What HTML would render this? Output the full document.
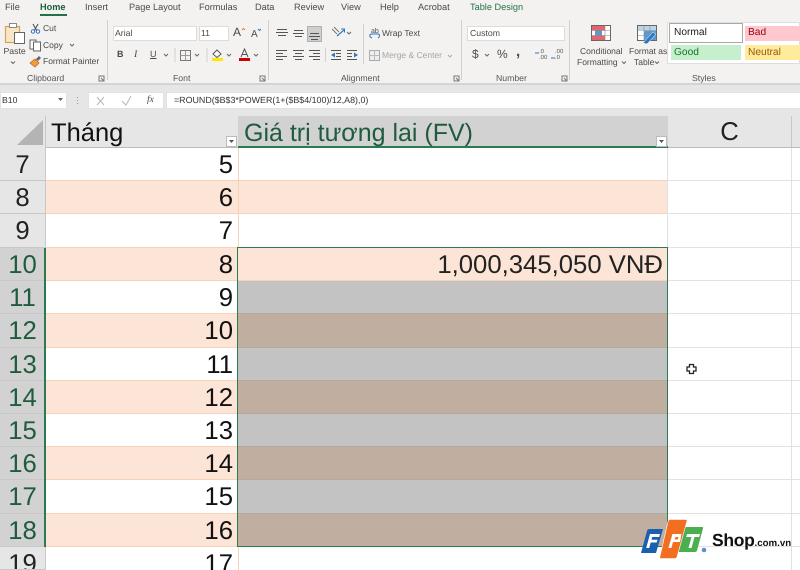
<!DOCTYPE html>
<html><head><meta charset="utf-8">
<style>
html,body{margin:0;padding:0}
body{width:800px;height:570px;overflow:hidden;position:relative;background:#fff;font-family:"Liberation Sans",sans-serif;text-rendering:geometricPrecision}
.a{position:absolute}
.t{position:absolute;white-space:nowrap;color:#4a4a4a;font-size:8.5px;line-height:11px}
.tab{position:absolute;top:2px;white-space:nowrap;color:#4a4a4a;font-size:9.2px;line-height:11px}
.r{position:absolute;left:0;width:45px;background:#e6e6e6;border-bottom:1px solid #c8c8c8;box-sizing:border-box;font-size:25.7px;text-align:center;color:#222;overflow:hidden}
.r.s{background:#d2d2d2;color:#1f5c3e}
.c{position:absolute;left:46px;width:192px;box-sizing:border-box;font-size:25.7px;text-align:right;padding-right:5px;color:#111;overflow:hidden;border-bottom:1px solid #f6d3b8}
.v{position:absolute;left:238px;width:430px;box-sizing:border-box;overflow:hidden;font-size:25.7px;text-align:right;padding-right:5px;color:#222}
.z{position:absolute;left:668px;width:132px;border-bottom:1px solid #e2e2e2;box-sizing:border-box}
.sep{position:absolute;top:20px;width:1px;height:60px;background:#d2d0ce}
.grp{position:absolute;top:73px;font-size:8.7px;color:#555;line-height:11px;white-space:nowrap}
svg{position:absolute;overflow:visible}
</style></head><body>

<div class="a" style="left:0;top:0;width:800px;height:83px;background:#f3f2f1"></div>
<div class="a" style="left:0;top:83px;width:800px;height:33px;background:#e6e6e6"></div>
<div class="a" style="left:0;top:83px;width:800px;height:2px;background:#d4d4d4"></div>

<div class="tab" style="left:5px">File</div>
<div class="tab" style="left:40px;color:#1f5c3e;font-weight:bold">Home</div>
<div class="a" style="left:40px;top:14px;width:27px;height:2px;background:#217346"></div>
<div class="tab" style="left:85px">Insert</div>
<div class="tab" style="left:129px">Page Layout</div>
<div class="tab" style="left:199px">Formulas</div>
<div class="tab" style="left:255px">Data</div>
<div class="tab" style="left:294px">Review</div>
<div class="tab" style="left:341px">View</div>
<div class="tab" style="left:380px">Help</div>
<div class="tab" style="left:418px">Acrobat</div>
<div class="tab" style="left:470px;color:#217346">Table Design</div>

<svg style="left:0;top:0" width="800" height="84">
<!-- clipboard -->
<rect x="5.500" y="26.500" width="14" height="16" fill="#f8e6c6" stroke="#d9a257" stroke-width="1.200"/>
<rect x="9.500" y="23.500" width="7" height="4" fill="#fff" stroke="#888"/>
<rect x="14.500" y="32.500" width="10" height="11" fill="#fff" stroke="#666"/>
<path d="M33 24l5 9M38 24l-5 9" stroke="#555" stroke-width="1.100" fill="none"/>
<circle cx="33" cy="31.500" r="1.700" fill="#fff" stroke="#2b79c2"/><circle cx="38" cy="31.500" r="1.700" fill="#fff" stroke="#2b79c2"/>
<rect x="30" y="40" width="6" height="9" fill="#fff" stroke="#666"/>
<rect x="33.500" y="42" width="7" height="9" fill="#fff" stroke="#666"/>
<path d="M30 63l5-4 4 4-4 4z" fill="#e8a33d" stroke="#c55a11" stroke-width=".7"/>
<path d="M36 59l3-3 2 2-3 3z" fill="#666"/>
<!-- chevrons -->
<path d="M11 61.500l2 2 2-2M70 44l2 2 2-2M192 33l2 2 2-2M223 33l2 2 2-2M164 54l2 2 2-2M195 54l2 2 2-2M227 54l2 2 2-2M254 54l2 2 2-2M347 32l2 2 2-2M485 54l2 2 2-2M557 33l2 2 2-2M622 61.500l2 2 2-2M655 61.500l2 2 2-2" stroke="#666" fill="none"/>
<path d="M448 55l2 2 2-2" stroke="#aaa" fill="none"/>
<!-- font grow/shrink -->
<path d="M242 30l1.500-1.500 1.500 1.500" stroke="#d9862b" fill="none"/>
<path d="M258 29l1.500 1.500 1.500-1.500" stroke="#2b79c2" fill="none"/>
<!-- font row -->
<rect x="180.500" y="50.500" width="10" height="10" fill="none" stroke="#777"/><path d="M185.500 50.500v10M180.500 55.500h10" stroke="#999"/>
<path d="M213 54l4-4 4 4-4 3.500z" fill="#fff" stroke="#555"/><rect x="212" y="58" width="11" height="3" fill="#ffe900"/>
<path d="M241 57l3.500-8 3.500 8M242 54.500h5" fill="none" stroke="#555"/><rect x="239" y="58" width="11" height="3" fill="#d00000"/>
<path d="M175 48v14M207 48v14" stroke="#d2d0ce"/>
<!-- launchers -->
<g fill="none" stroke="#777"><path d="M99 76h5v5h-5zM101 78l3 3"/><path d="M260 76h5v5h-5zM262 78l3 3"/><path d="M454 76h5v5h-5zM456 78l3 3"/><path d="M562 76h5v5h-5zM564 78l3 3"/></g>
</svg>
<div class="t" style="left:3.500px;top:46px;font-size:8.700px">Paste</div>
<div class="t" style="left:43px;top:23px">Cut</div>
<div class="t" style="left:43px;top:40px">Copy</div>
<div class="t" style="left:43px;top:56px">Format Painter</div>
<div class="grp" style="left:27px">Clipboard</div>
<div class="sep" style="left:107px"></div>

<div class="a" style="left:113px;top:26px;width:84px;height:15px;background:#fff;border:1px solid #dedcda;box-sizing:border-box"></div>
<div class="t" style="left:115px;top:28px;font-size:8.700px">Arial</div>
<div class="a" style="left:199px;top:26px;width:30px;height:15px;background:#fff;border:1px solid #dedcda;box-sizing:border-box"></div>
<div class="t" style="left:201px;top:28px;font-size:8.700px">11</div>
<div class="t" style="left:233px;top:27px;font-size:12px">A</div>
<div class="t" style="left:251px;top:29px;font-size:10px">A</div>
<div class="t" style="left:117px;top:49px;font-weight:bold;font-size:9px">B</div>
<div class="t" style="left:134px;top:49px;font-style:italic;font-family:'Liberation Serif',serif;font-size:10px">I</div>
<div class="t" style="left:150px;top:49px;text-decoration:underline;font-size:9px">U</div>
<div class="grp" style="left:173px">Font</div>
<div class="sep" style="left:268px"></div>

<div class="a" style="left:307px;top:26px;width:15px;height:16px;background:#cfcfcf;border:1px solid #b0b0b0;box-sizing:border-box"></div>
<svg style="left:0;top:0" width="460" height="84">
<g stroke="#555" fill="none">
<path d="M277 29.500h10M276 32.500h12M278 35.500h8"/>
<path d="M294 30.500h9M293 33.500h11M295 36.500h7"/>
<path d="M310 33.500h9M309 36.500h11M311 39.500h7"/>
<path d="M276 50.500h11M276 53.500h7M276 56.500h11M276 59.500h7"/>
<path d="M293 50.500h11M295 53.500h7M293 56.500h11M295 59.500h7"/>
<path d="M309 50.500h11M313 53.500h7M309 56.500h11M313 59.500h7"/>
<path d="M331 50.500h10M336 53.500h5M336 56.500h5M331 59.500h10"/>
<path d="M347 50.500h10M347 53.500h5M347 56.500h5M347 59.500h10"/>
</g>
<path d="M331 55l4-2.500v5zM358 55l-4-2.500v5z" fill="#2b79c2"/>
<path d="M337 36l7-6" stroke="#2b79c2" stroke-width="1.200"/><path d="M341 29h3.500v3.500" stroke="#2b79c2" fill="none"/><path d="M332 29l5 5M334 27l5 5" stroke="#777"/>
<path d="M325.500 48v14M363.500 24v40" stroke="#d2d0ce"/>
<path d="M372 38c-3-1-3-4 0-4h6c2 0 2 3 0 4" stroke="#2b79c2" fill="none"/>
<rect x="369.500" y="50.500" width="10" height="10" fill="#ededed" stroke="#aaa"/><path d="M369.500 55.500h10M374.500 50.500v10" stroke="#bbb"/>
</svg>
<div class="t" style="left:371px;top:26px;font-size:7px">ab</div>
<div class="t" style="left:382px;top:28px">Wrap Text</div>
<div class="t" style="left:382px;top:50px;color:#a5a5a5">Merge &amp; Center</div>
<div class="grp" style="left:341px">Alignment</div>
<div class="sep" style="left:461px"></div>

<div class="a" style="left:467px;top:26px;width:98px;height:15px;background:#fff;border:1px solid #dedcda;box-sizing:border-box"></div>
<div class="t" style="left:470px;top:28px;font-size:8.700px">Custom</div>
<div class="t" style="left:472px;top:49px;font-size:12px">$</div>
<div class="t" style="left:497px;top:49px;font-size:12px">%</div>
<div class="t" style="left:516px;top:46px;font-size:15px;font-weight:bold">,</div>
<div class="t" style="left:539px;top:50px;font-size:6px;line-height:5.500px;color:#555">.0<br>.00</div>
<div class="t" style="left:555px;top:50px;font-size:6px;line-height:5.500px;color:#555">.00<br>.0</div>
<svg style="left:0;top:0" width="570" height="84"><path d="M535 53h4M551 58h4" stroke="#2b79c2"/></svg>
<div class="grp" style="left:496px">Number</div>
<div class="sep" style="left:569px"></div>

<svg style="left:0;top:0" width="800" height="84">
<rect x="591.500" y="25.500" width="19" height="15" fill="#fff" stroke="#666"/>
<rect x="592" y="26" width="13" height="4.500" fill="#e8636b"/><rect x="592" y="35.500" width="13" height="4.500" fill="#e8636b"/><rect x="595" y="30.500" width="7" height="5" fill="#5b9bd5"/>
<path d="M591.500 30.500h19M591.500 35.500h19M598 25.500v15M605 25.500v15" stroke="#8a8a8a" stroke-width=".6"/>
<rect x="637.500" y="25.500" width="19" height="15" fill="#fff" stroke="#666"/>
<rect x="638" y="26" width="18" height="4" fill="#bcd3e8"/><rect x="644" y="30.500" width="12" height="9.500" fill="#5b9bd5"/>
<path d="M637.500 30.500h19M637.500 35.500h19M644 25.500v15M650 25.500v15" stroke="#8a8a8a" stroke-width=".6"/>
<path d="M643 43l10-11 3 2-9 10z" fill="#2b79c2" stroke="#fff" stroke-width=".5"/>
</svg>
<div class="t" style="left:580px;top:46px">Conditional</div>
<div class="t" style="left:577px;top:57px">Formatting</div>
<div class="t" style="left:629px;top:46px">Format as</div>
<div class="t" style="left:634px;top:57px">Table</div>

<div class="a" style="left:667px;top:22px;width:133px;height:42px;background:#fff;border:1px solid #e0dedc;box-sizing:border-box"></div>
<div class="a" style="left:669px;top:23px;width:74px;height:20px;background:#fff;border:1.500px solid #a8a8a8;box-sizing:border-box"></div>
<div class="t" style="left:674px;top:27px;font-size:10.200px;color:#222">Normal</div>
<div class="a" style="left:745px;top:26px;width:55px;height:15px;background:#ffc7ce"></div>
<div class="t" style="left:748px;top:27px;font-size:10.200px;color:#9c0006">Bad</div>
<div class="a" style="left:671px;top:45px;width:70px;height:15px;background:#c6efce"></div>
<div class="t" style="left:674px;top:47px;font-size:10.200px;color:#16702a">Good</div>
<div class="a" style="left:745px;top:45px;width:55px;height:15px;background:#ffeb9c"></div>
<div class="t" style="left:748px;top:47px;font-size:10.200px;color:#9c5700">Neutral</div>
<div class="grp" style="left:692px">Styles</div>

<div class="a" style="left:0;top:92px;width:67px;height:17px;background:#fff;border:1px solid #e2e2e2;box-sizing:border-box"></div>
<div class="t" style="left:2px;top:95px;color:#333;font-size:8.700px">B10</div>
<div class="a" style="left:88px;top:92px;width:76px;height:17px;background:#fff;border:1px solid #e2e2e2;box-sizing:border-box"></div>
<svg style="left:0;top:0" width="170" height="116"><path d="M58 98l2.500 3 2.500-3z" fill="#666"/>
<path d="M77.500 97v1M77.500 100v1M77.500 103v1" stroke="#999"/>
<path d="M97 97l7 8M104 97l-7 8M122 101l4 4 5-9" stroke="#b8b8b8" fill="none"/></svg>
<div class="t" style="left:147px;top:95px;font-family:'Liberation Serif',serif;font-style:italic;color:#444;font-size:9.500px">fx</div>
<div class="a" style="left:166px;top:92px;width:634px;height:17px;background:#fff;border:1px solid #e2e2e2;border-right:0;box-sizing:border-box"></div>
<div class="t" style="left:174px;top:95px;color:#333;font-size:8.900px">=ROUND($B$3*POWER(1+($B$4/100)/12,A8),0)</div>

<div class="a" style="left:0;top:116px;width:800px;height:32px;background:#e6e6e6"></div>
<svg style="left:0;top:0" width="50" height="148"><path d="M17 145L43 120v25z" fill="#b4b4b4"/></svg>
<div class="a" style="left:45px;top:116px;width:1px;height:454px;background:#c8c8c8"></div>
<div class="a" style="left:46px;top:116px;width:192px;height:32px;background:#e6e6e6;border-bottom:1px solid #bbb;box-sizing:border-box"></div>
<div class="a" style="left:51px;top:117px;font-size:25.500px;line-height:32px;color:#111">Tháng</div>
<div class="a" style="left:238px;top:116px;width:430px;height:32px;background:#d2d2d2;border-bottom:2px solid #2b7a52;box-sizing:border-box"></div>
<div class="a" style="left:244px;top:117px;font-size:25px;line-height:32px;color:#1f5c3e;white-space:nowrap">Giá trị tương lai (FV)</div>
<div class="a" style="left:668px;top:116px;width:123px;height:32px;box-sizing:border-box;border-bottom:1px solid #bbb;text-align:center;font-size:25.700px;line-height:33px;color:#222">C</div>
<div class="a" style="left:791px;top:116px;width:9px;height:32px;box-sizing:border-box;border-left:1px solid #c8c8c8;border-bottom:1px solid #bbb"></div>
<div class="a" style="left:226px;top:136px;width:11px;height:11px;background:#fff;border:1px solid #bbb;box-sizing:border-box"></div>
<div class="a" style="left:656px;top:136px;width:11px;height:11px;background:#fff;border:1px solid #bbb;box-sizing:border-box"></div>
<svg style="left:0;top:0" width="670" height="148"><path d="M229 140h5l-2.500 3zM659 140h5l-2.500 3z" fill="#555"/></svg>

<!-- rows -->
<div class="r" style="top:148px;height:33px;line-height:35px">7</div>
<div class="r" style="top:181px;height:33px;line-height:35px">8</div>
<div class="r" style="top:214px;height:34px;line-height:35px">9</div>
<div class="r s" style="top:248px;height:33px;line-height:35px">10</div>
<div class="r s" style="top:281px;height:33px;line-height:35px">11</div>
<div class="r s" style="top:314px;height:34px;line-height:35px">12</div>
<div class="r s" style="top:348px;height:33px;line-height:35px">13</div>
<div class="r s" style="top:381px;height:33px;line-height:35px">14</div>
<div class="r s" style="top:414px;height:33px;line-height:35px">15</div>
<div class="r s" style="top:447px;height:33px;line-height:35px">16</div>
<div class="r s" style="top:480px;height:34px;line-height:35px">17</div>
<div class="r s" style="top:514px;height:33px;line-height:35px">18</div>
<div class="r" style="top:547px;height:23px;line-height:35px">19</div>

<div class="c" style="top:148px;height:33px;line-height:35px;background:#fff">5</div>
<div class="c" style="top:181px;height:33px;line-height:35px;background:#fce4d6">6</div>
<div class="c" style="top:214px;height:34px;line-height:35px;background:#fff">7</div>
<div class="c" style="top:248px;height:33px;line-height:35px;background:#fce4d6">8</div>
<div class="c" style="top:281px;height:33px;line-height:35px;background:#fff">9</div>
<div class="c" style="top:314px;height:34px;line-height:35px;background:#fce4d6">10</div>
<div class="c" style="top:348px;height:33px;line-height:35px;background:#fff">11</div>
<div class="c" style="top:381px;height:33px;line-height:35px;background:#fce4d6">12</div>
<div class="c" style="top:414px;height:33px;line-height:35px;background:#fff">13</div>
<div class="c" style="top:447px;height:33px;line-height:35px;background:#fce4d6">14</div>
<div class="c" style="top:480px;height:34px;line-height:35px;background:#fff">15</div>
<div class="c" style="top:514px;height:33px;line-height:35px;background:#fce4d6">16</div>
<div class="c" style="top:547px;height:23px;line-height:35px;background:#fff;border-bottom:0">17</div>

<div class="v" style="top:148px;height:33px;background:#fff;border-bottom:1px solid #f6d3b8"></div>
<div class="v" style="top:181px;height:33px;background:#fce4d6;border-bottom:1px solid #f6d3b8"></div>
<div class="v" style="top:214px;height:34px;background:#fff;border-bottom:1px solid #f6d3b8"></div>
<div class="v" style="top:248px;height:33px;line-height:35px;background:#fce4d6;border-bottom:1px solid #f6d3b8">1,000,345,050 VNĐ</div>
<div class="v" style="top:281px;height:33px;background:#c3c3c3;border-bottom:1px solid #b4a99f"></div>
<div class="v" style="top:314px;height:34px;background:#c0afa1;border-bottom:1px solid #b4a99f"></div>
<div class="v" style="top:348px;height:33px;background:#c3c3c3;border-bottom:1px solid #b4a99f"></div>
<div class="v" style="top:381px;height:33px;background:#c0afa1;border-bottom:1px solid #b4a99f"></div>
<div class="v" style="top:414px;height:33px;background:#c3c3c3;border-bottom:1px solid #b4a99f"></div>
<div class="v" style="top:447px;height:33px;background:#c0afa1;border-bottom:1px solid #b4a99f"></div>
<div class="v" style="top:480px;height:34px;background:#c3c3c3;border-bottom:1px solid #b4a99f"></div>
<div class="v" style="top:514px;height:33px;background:#c0afa1"></div>
<div class="a" style="left:238px;top:148px;width:1px;height:99px;background:#f6d3b8"></div>
<div class="a" style="left:238px;top:547px;width:1px;height:23px;background:#f6d3b8"></div>

<!-- column C gridlines -->
<div class="z" style="top:148px;height:33px"></div>
<div class="z" style="top:181px;height:33px"></div>
<div class="z" style="top:214px;height:34px"></div>
<div class="z" style="top:248px;height:33px"></div>
<div class="z" style="top:281px;height:33px"></div>
<div class="z" style="top:314px;height:34px"></div>
<div class="z" style="top:348px;height:33px"></div>
<div class="z" style="top:381px;height:33px"></div>
<div class="z" style="top:414px;height:33px"></div>
<div class="z" style="top:447px;height:33px"></div>
<div class="z" style="top:480px;height:34px"></div>
<div class="z" style="top:514px;height:33px"></div>
<div class="a" style="left:791px;top:148px;width:1px;height:422px;background:#e2e2e2"></div>

<!-- selection -->
<div class="a" style="left:44px;top:248px;width:2px;height:299px;background:#2b7a52"></div>
<div class="a" style="left:237px;top:247px;width:431px;height:300px;border:1px solid #2b7a52;box-sizing:border-box"></div>
<div class="a" style="left:667px;top:148px;width:1px;height:99px;background:#e0e0e0"></div>

<!-- cursor -->
<svg style="left:0;top:0" width="800" height="570"><path d="M689.500 364.500h4v2.500h2.500v4h-2.500v2.500h-4V371H687v-4h2.500z" fill="#fff" stroke="#222" stroke-width="1.300"/></svg>

<!-- FPT logo -->
<svg style="left:0;top:0" width="800" height="570">
<path d="M647 531q.5-2 2.500-2H663l-7 24h-15z" fill="#1b5fae"/>
<path d="M683 527h19q1.500 0 1 1.500l-6 22q-.5 1.500-2 1.500h-18z" fill="#4bae4f"/>
<path d="M668 521.500q.5-2 2.500-2H686q1.500 0 1 1.500l-10 36q-.5 1.500-2 1.500h-15.500z" fill="#f26f21" stroke="#fff" stroke-width=".6"/>
<path d="M650 534h10l-.8 3h-7l-.7 2.800h6l-.8 2.700h-6l-1.500 5.500h-3z" fill="#fff"/>
<path d="M672.500 534h9l-1.500 8h-7l-1.600 6h-3zM675.500 537l-.8 2.500h3.200l.5-2.500z" fill="#fff" fill-rule="evenodd"/>
<path d="M687 534h13l-.8 3h-4.700l-3 11h-3l3-11h-5.300z" fill="#fff"/>
<circle cx="704" cy="550" r="2.300" fill="#5a8fc9"/>
</svg>
<div class="a" style="left:712px;top:528px;font-size:17.500px;line-height:24px;font-weight:bold;color:#111;letter-spacing:-.3px;white-space:nowrap">Shop<span style="font-size:9.700px;letter-spacing:0">.com.vn</span></div>

</body></html>
